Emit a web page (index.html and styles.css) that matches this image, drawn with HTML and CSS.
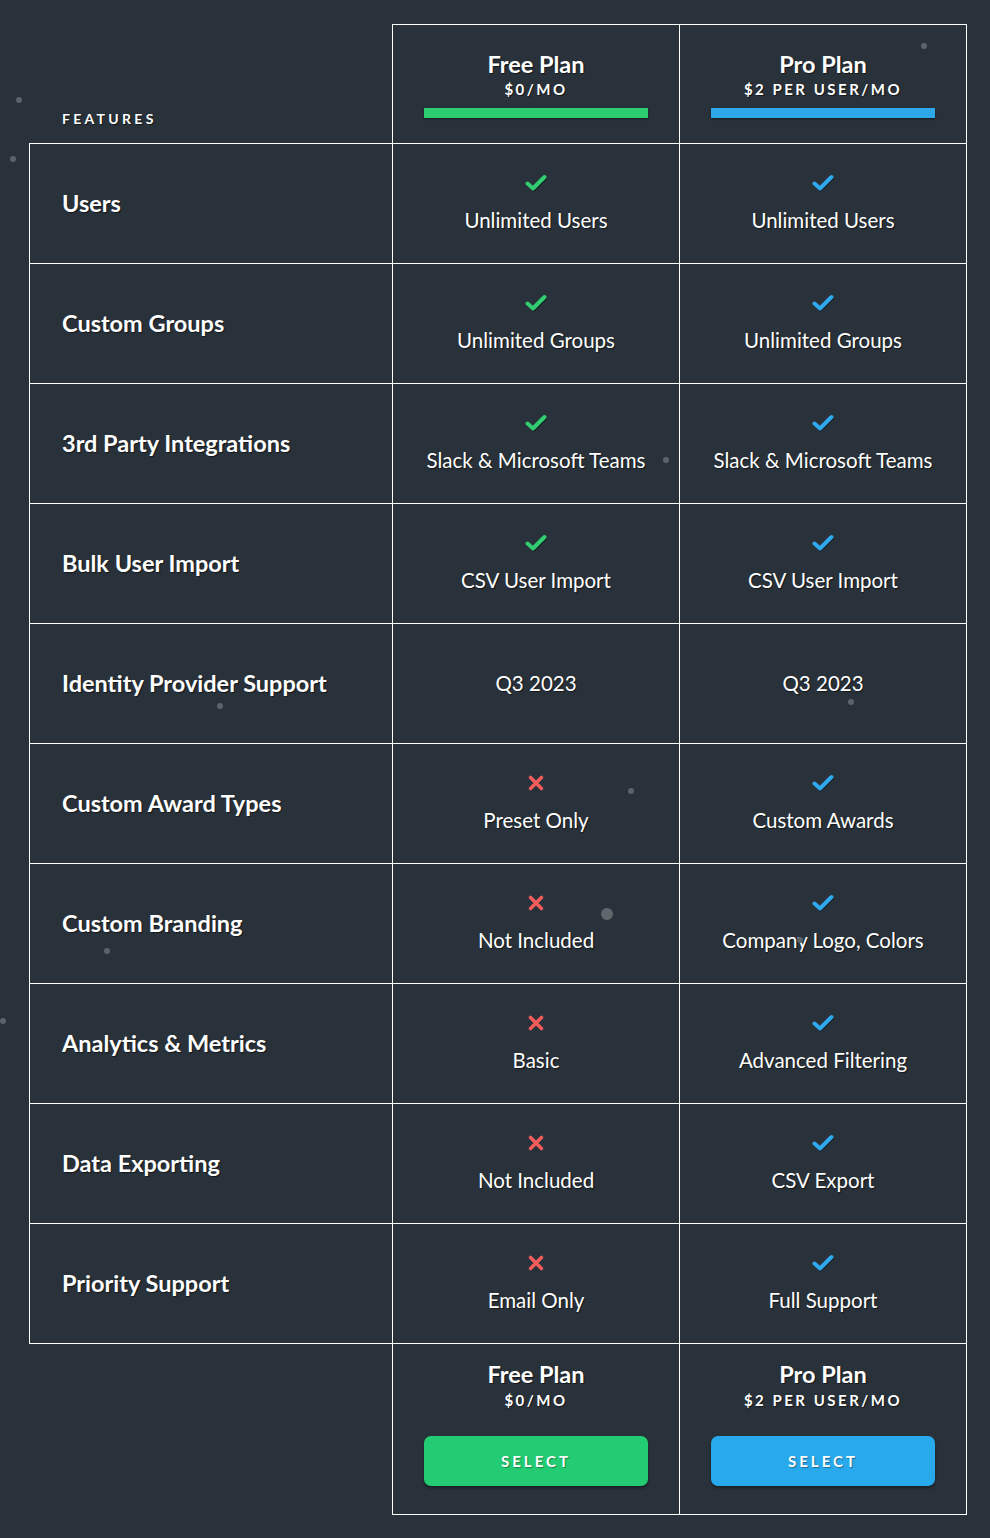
FILE: index.html
```html
<!DOCTYPE html>
<html lang="en">
<head>
<meta charset="utf-8">
<title>Plan Comparison</title>
<link rel="stylesheet" href="styles.css">
</head>
<body>
<div class="page">
  <span class="dot" style="left:16px;top:97px"></span>
  <span class="dot" style="left:10px;top:156px"></span>
  <span class="dot" style="left:921px;top:43px"></span>
  <span class="dot" style="left:663px;top:457px"></span>
  <span class="dot" style="left:217px;top:703px"></span>
  <span class="dot" style="left:848px;top:699px"></span>
  <span class="dot" style="left:628px;top:788px"></span>
  <span class="dot big" style="left:601px;top:908px"></span>
  <span class="dot" style="left:104px;top:948px"></span>
  <span class="dot" style="left:797px;top:937px"></span>
  <span class="dot" style="left:0px;top:1018px"></span>

  <div class="table">
    <div class="head">
      <div class="head-label">Features</div>
      <div class="plan plan-free">
        <div class="plan-name">Free Plan</div>
        <div class="plan-price">$0/MO</div>
        <div class="plan-bar"></div>
      </div>
      <div class="plan plan-pro">
        <div class="plan-name">Pro Plan</div>
        <div class="plan-price">$2 PER USER/MO</div>
        <div class="plan-bar"></div>
      </div>
    </div>

    <div class="body">
      <div class="feature">Users</div>
      <div class="cell"><span class="ic ok-g"></span><span class="val">Unlimited Users</span></div>
      <div class="cell"><span class="ic ok-b"></span><span class="val">Unlimited Users</span></div>

      <div class="feature">Custom Groups</div>
      <div class="cell"><span class="ic ok-g"></span><span class="val">Unlimited Groups</span></div>
      <div class="cell"><span class="ic ok-b"></span><span class="val">Unlimited Groups</span></div>

      <div class="feature">3rd Party Integrations</div>
      <div class="cell"><span class="ic ok-g"></span><span class="val">Slack &amp; Microsoft Teams</span></div>
      <div class="cell"><span class="ic ok-b"></span><span class="val">Slack &amp; Microsoft Teams</span></div>

      <div class="feature">Bulk User Import</div>
      <div class="cell"><span class="ic ok-g"></span><span class="val">CSV User Import</span></div>
      <div class="cell"><span class="ic ok-b"></span><span class="val">CSV User Import</span></div>

      <div class="feature">Identity Provider Support</div>
      <div class="cell"><span class="val">Q3 2023</span></div>
      <div class="cell"><span class="val">Q3 2023</span></div>

      <div class="feature">Custom Award Types</div>
      <div class="cell"><span class="ic no"></span><span class="val">Preset Only</span></div>
      <div class="cell"><span class="ic ok-b"></span><span class="val">Custom Awards</span></div>

      <div class="feature">Custom Branding</div>
      <div class="cell"><span class="ic no"></span><span class="val">Not Included</span></div>
      <div class="cell"><span class="ic ok-b"></span><span class="val">Company Logo, Colors</span></div>

      <div class="feature">Analytics &amp; Metrics</div>
      <div class="cell"><span class="ic no"></span><span class="val">Basic</span></div>
      <div class="cell"><span class="ic ok-b"></span><span class="val">Advanced Filtering</span></div>

      <div class="feature">Data Exporting</div>
      <div class="cell"><span class="ic no"></span><span class="val">Not Included</span></div>
      <div class="cell"><span class="ic ok-b"></span><span class="val">CSV Export</span></div>

      <div class="feature">Priority Support</div>
      <div class="cell"><span class="ic no"></span><span class="val">Email Only</span></div>
      <div class="cell"><span class="ic ok-b"></span><span class="val">Full Support</span></div>
    </div>

    <div class="foot">
      <div class="foot-empty"></div>
      <div class="plan plan-free foot-plan">
        <div class="plan-name">Free Plan</div>
        <div class="plan-price">$0/MO</div>
        <button class="select">Select</button>
      </div>
      <div class="plan plan-pro foot-plan">
        <div class="plan-name">Pro Plan</div>
        <div class="plan-price">$2 PER USER/MO</div>
        <button class="select">Select</button>
      </div>
    </div>
  </div>
</div>
</body>
</html>
```

FILE: styles.css
```css
* { box-sizing: border-box; }

html, body {
  margin: 0;
  padding: 0;
  background: #29323a;
}

body {
  font-family: "Lato", "Noto Sans", "Liberation Sans", sans-serif;
  color: #ffffff;
  text-shadow: 1px 1px 1px rgba(0, 0, 0, 0.55);
}

.page {
  position: relative;
  width: 990px;
  min-height: 1538px;
  padding: 24px 0 0 29px;
}

.dot {
  position: absolute;
  width: 6px;
  height: 6px;
  border-radius: 50%;
  background: #5b636a;
}

.dot.big {
  width: 12px;
  height: 12px;
  background: #60676d;
}

.table {
  width: 938px;
}

.head,
.foot {
  display: grid;
  grid-template-columns: 363px 288px 287px;
}

.body {
  display: grid;
  grid-template-columns: 363px 287px 287px;
}

/* header */
.head-label {
  align-self: end;
  padding: 0 0 16px 33px;
  font-size: 14px;
  font-weight: 700;
  letter-spacing: 3.3px;
  text-transform: uppercase;
}

.plan {
  display: flex;
  flex-direction: column;
  align-items: center;
  border-top: 1px solid #ffffff;
  border-right: 1px solid #ffffff;
  height: 119px;
  padding: 24px 31px 0;
}

.plan-free {
  border-left: 1px solid #ffffff;
}

.plan-name {
  font-size: 23.5px;
  font-weight: 700;
  line-height: 30px;
}

.plan-price {
  margin-top: 1px;
  font-size: 15px;
  font-weight: 700;
  line-height: 18px;
  letter-spacing: 2.5px;
}

.plan-bar {
  width: 100%;
  height: 10px;
  margin-top: 10px;
  box-shadow: 0 1px 2px rgba(0, 0, 0, 0.5);
}

.plan-free .plan-bar { background: #2ecc71; }
.plan-pro .plan-bar { background: #2ea8e8; }

/* body */
.body {
  border-top: 1px solid #ffffff;
  border-left: 1px solid #ffffff;
}

.feature,
.cell {
  height: 120px;
  border-right: 1px solid #ffffff;
  border-bottom: 1px solid #ffffff;
}

.feature {
  display: flex;
  align-items: center;
  padding-left: 32px;
  padding-bottom: 2px;
  font-size: 23.5px;
  font-weight: 700;
}

.cell {
  display: flex;
  flex-direction: column;
  align-items: center;
  justify-content: center;
  gap: 16px;
  padding-bottom: 2px;
}

.val {
  font-size: 20.5px;
  line-height: 24px;
}

.ic {
  display: block;
  width: 22px;
  height: 18px;
  background-repeat: no-repeat;
  background-position: center;
}

.ok-g {
  background-image: url("data:image/svg+xml,%3Csvg xmlns='http://www.w3.org/2000/svg' width='22' height='18' viewBox='0 0 22 18'%3E%3Cpath d='M2.5 9.5 L8 14.5 L19.5 3' fill='none' stroke='%2300000080' stroke-width='4.2' stroke-linecap='round' stroke-linejoin='round' transform='translate(0.6 0.8)'/%3E%3Cpath d='M2.5 9.5 L8 14.5 L19.5 3' fill='none' stroke='%2332cc72' stroke-width='4' stroke-linecap='round' stroke-linejoin='round'/%3E%3C/svg%3E");
}

.ok-b {
  background-image: url("data:image/svg+xml,%3Csvg xmlns='http://www.w3.org/2000/svg' width='22' height='18' viewBox='0 0 22 18'%3E%3Cpath d='M2.5 9.5 L8 14.5 L19.5 3' fill='none' stroke='%2300000080' stroke-width='4.2' stroke-linecap='round' stroke-linejoin='round' transform='translate(0.6 0.8)'/%3E%3Cpath d='M2.5 9.5 L8 14.5 L19.5 3' fill='none' stroke='%232fa8ec' stroke-width='4' stroke-linecap='round' stroke-linejoin='round'/%3E%3C/svg%3E");
}

.no {
  background-image: url("data:image/svg+xml,%3Csvg xmlns='http://www.w3.org/2000/svg' width='22' height='18' viewBox='0 0 22 18'%3E%3Cpath d='M5.5 3.5 L16.5 14.5 M16.5 3.5 L5.5 14.5' fill='none' stroke='%23f25c5c' stroke-width='3.6' stroke-linecap='round'/%3E%3C/svg%3E");
}

/* footer */
.foot-plan {
  height: 171px;
  border-top: none;
  border-bottom: 1px solid #ffffff;
  padding-top: 15px;
}

.foot-plan .plan-price {
  margin-top: 2px;
}

.select {
  width: 100%;
  height: 50px;
  margin-top: 27px;
  border: none;
  border-radius: 7px;
  color: #ffffff;
  font-family: inherit;
  font-size: 15px;
  font-weight: 700;
  letter-spacing: 3px;
  text-transform: uppercase;
  text-shadow: 1px 1px 1px rgba(0, 0, 0, 0.35);
  box-shadow: 0 2px 3px rgba(0, 0, 0, 0.4);
  cursor: pointer;
}

.plan-free .select { background: #23cc72; }
.plan-pro .select { background: #28a9ec; }
```
